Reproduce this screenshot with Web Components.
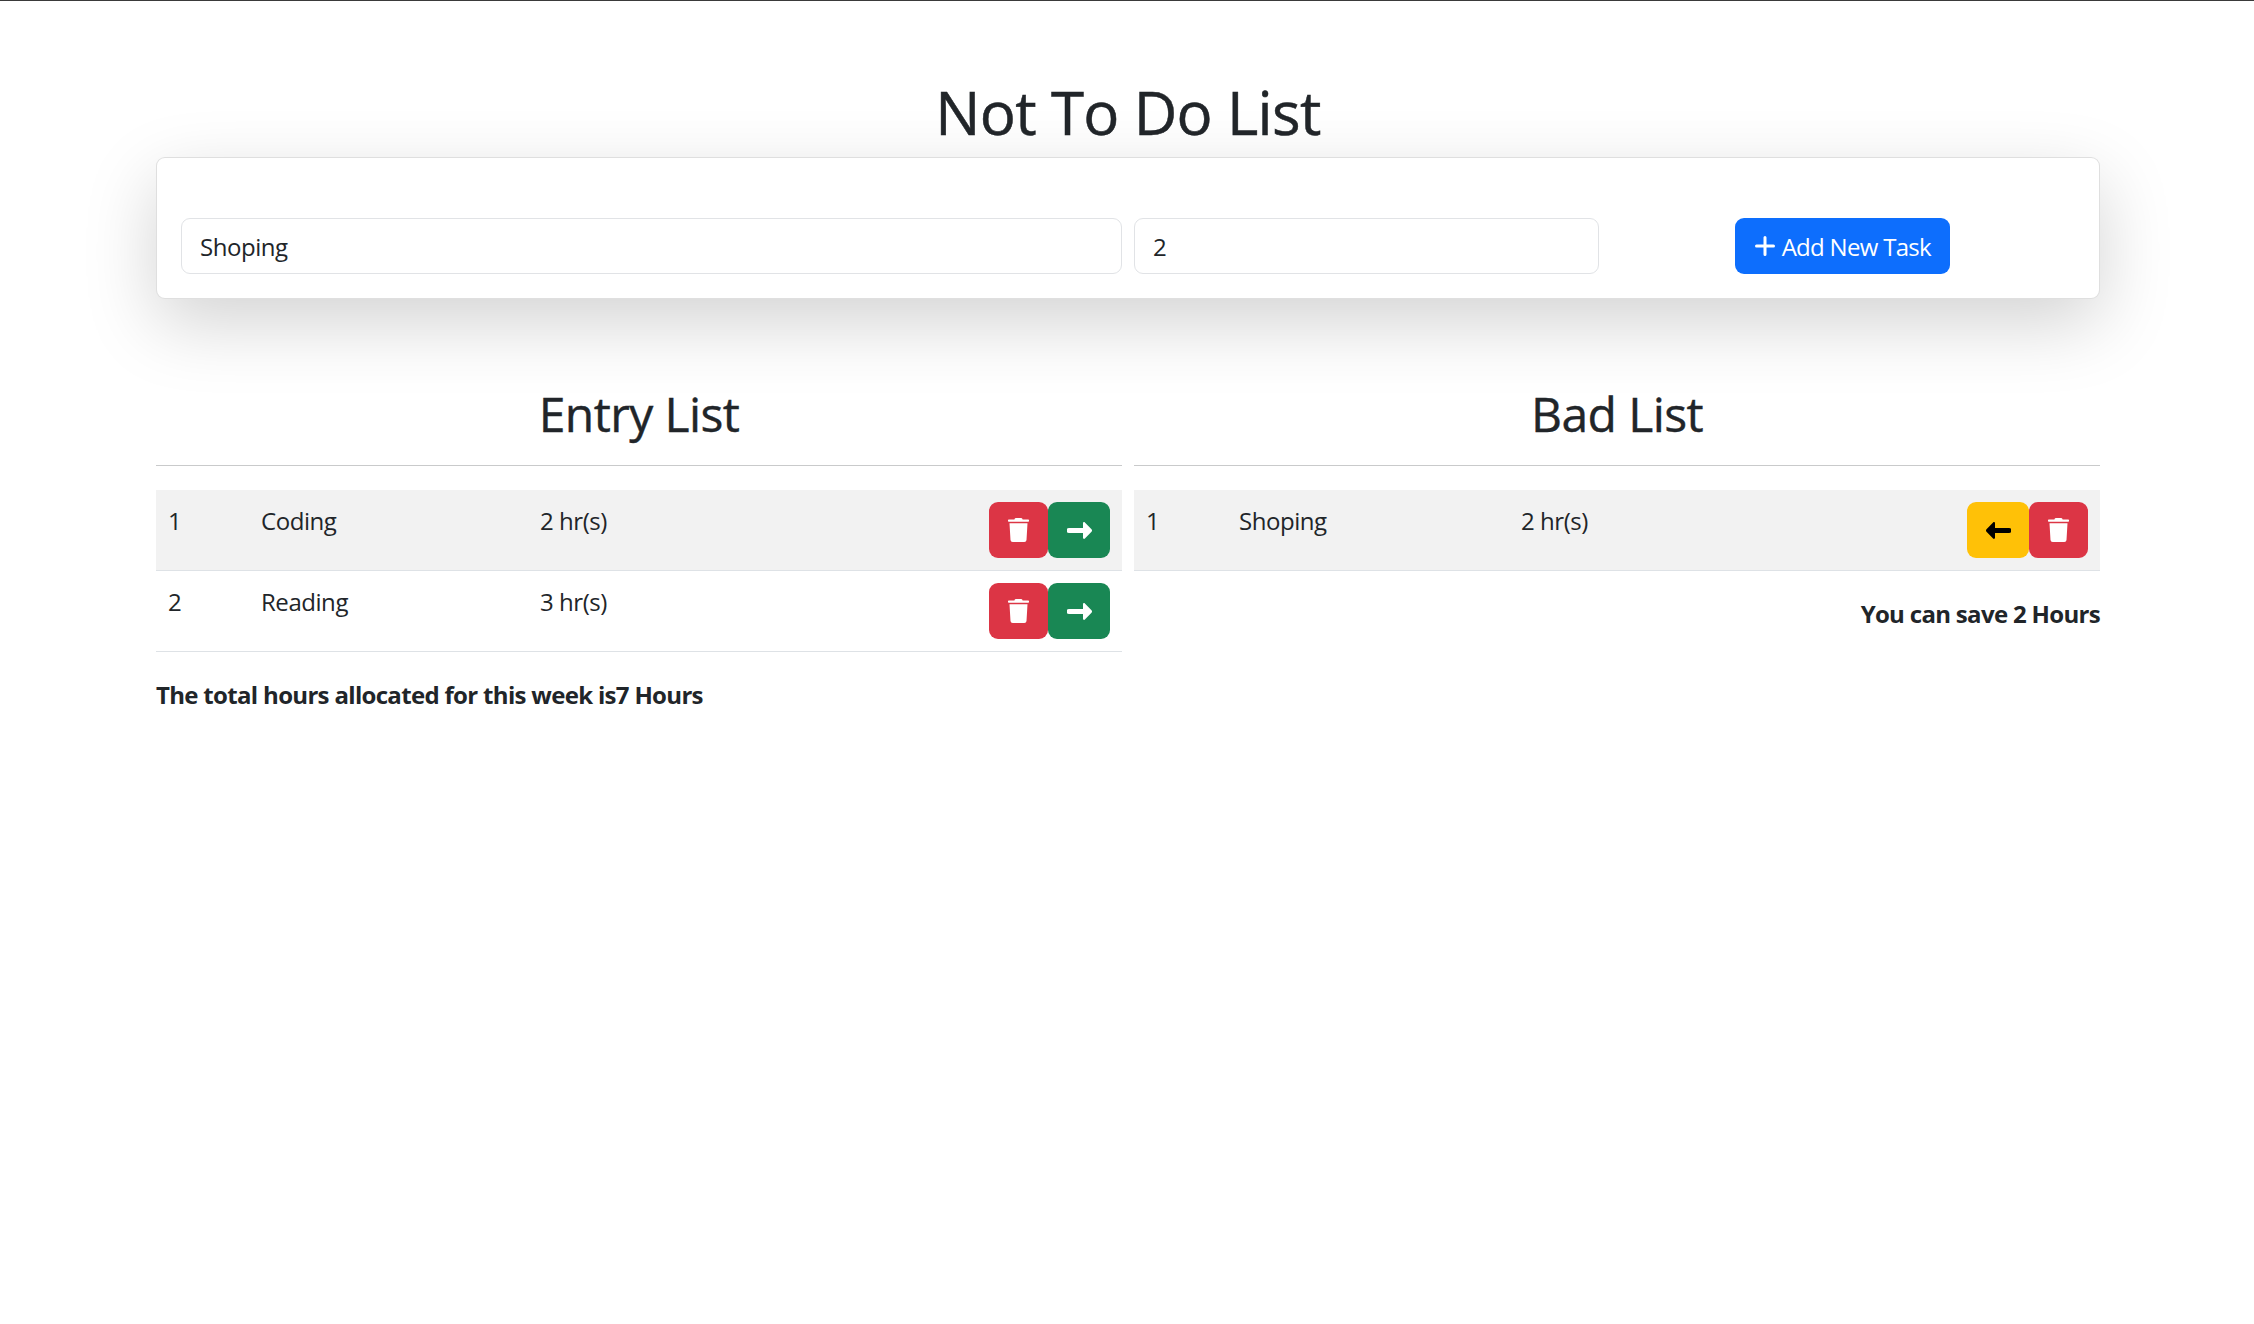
<!DOCTYPE html>
<html lang="en"><head><meta charset="utf-8"><title>Not To Do List</title>
<style>
html,body{margin:0;padding:0;background:#fff}
body{border-top:1px solid #3a3a3a;font:24px/36px "Open Sans","Noto Sans",sans-serif;color:#212529;letter-spacing:-.45px}
</style></head><body>
<todo-app>
  <task-form slot="form"></task-form>
  <task-list slot="left" heading="Entry List">
    <task-row num="1" name="Coding" hours="2 hr(s)" kind="entry"></task-row>
    <task-row num="2" name="Reading" hours="3 hr(s)" kind="entry"></task-row>
    <p slot="summary" style="margin:0;text-align:left">The total hours allocated for this week is7 Hours</p>
  </task-list>
  <task-list slot="right" heading="Bad List">
    <task-row num="1" name="Shoping" hours="2 hr(s)" kind="bad"></task-row>
    <p slot="summary" style="margin:0;text-align:right">You can save 2 Hours</p>
  </task-list>
</todo-app>
<script>
const ICONS={
 trash:'<svg viewBox="0 0 448 512" width="21" height="24" fill="currentColor"><path d="M432 32H312l-9.4-18.7A24 24 0 0 0 281.1 0H166.8a23.72 23.72 0 0 0-21.4 13.3L136 32H16A16 16 0 0 0 0 48v16a16 16 0 0 0 16 16h416a16 16 0 0 0 16-16V48a16 16 0 0 0-16-16zM53.2 467a48 48 0 0 0 47.9 45h245.8a48 48 0 0 0 47.9-45L416 112H32z"/></svg>',
 right:'<svg viewBox="0 0 25 17" width="25" height="17" fill="currentColor"><path d="M2 6h14V1.2c0-1 1.1-1.5 1.9-.8l6.6 6.9c.7.7.7 1.7 0 2.4l-6.6 6.9c-.8.7-1.9.2-1.9-.8V11H2a2.5 2.5 0 0 1 0-5z"/></svg>',
 left:'<svg viewBox="0 0 25 17" width="25" height="17" fill="currentColor"><path d="M23 6H9V1.2c0-1-1.1-1.5-1.9-.8L.5 7.3c-.7.7-.7 1.7 0 2.4l6.6 6.9c.8.7 1.9.2 1.9-.8V11h14a2.5 2.5 0 0 0 0-5z"/></svg>',
 plus:'<svg viewBox="0 0 20 20" width="20" height="20" fill="none" stroke="currentColor" stroke-width="3" stroke-linecap="round"><path d="M10 1.5v17M1.5 10h17"/></svg>'
};
class IconBtn extends HTMLElement{
 connectedCallback(){
  const c={danger:['#dc3545','#fff'],success:['#198754','#fff'],warning:['#ffc107','#000']}[this.getAttribute('variant')];
  this.attachShadow({mode:'open'}).innerHTML=`<style>
  :host{display:block}
  button{display:flex;align-items:center;justify-content:center;box-sizing:border-box;width:var(--w,62px);height:56px;border:0;padding:0;border-radius:9px;background:${c[0]};color:${c[1]}}
  </style><button type="button" aria-label="${this.getAttribute('icon')}">${ICONS[this.getAttribute('icon')]}</button>`;
 }
}
customElements.define('icon-btn',IconBtn);
class TaskRow extends HTMLElement{
 connectedCallback(){
  const g=a=>this.getAttribute(a), entry=g('kind')==='entry';
  const btns=entry?'<icon-btn variant="danger" icon="trash" style="--w:59px"></icon-btn><icon-btn variant="success" icon="right"></icon-btn>'
                  :'<icon-btn variant="warning" icon="left"></icon-btn><icon-btn variant="danger" icon="trash" style="--w:59px"></icon-btn>';
  this.attachShadow({mode:'open'}).innerHTML=`<style>
  :host{display:grid;grid-template-columns:93px ${entry?'279px':'282px'} 1fr auto;padding:12px;height:81px;box-sizing:border-box;border-bottom:1.5px solid #dee2e6;line-height:38px}
  :host(:nth-of-type(odd)){background:#f2f2f2}
  .a{display:flex}
  </style><span>${g('num')}</span><span>${g('name')}</span><span>${g('hours')}</span><span class="a">${btns}</span>`;
 }
}
customElements.define('task-row',TaskRow);
class TaskList extends HTMLElement{
 connectedCallback(){
  this.attachShadow({mode:'open'}).innerHTML=`<style>
  :host{display:block;min-width:0}
  h2{margin:0;font-size:48px;line-height:64px;font-weight:500;letter-spacing:-.6px;text-align:center;-webkit-text-stroke:.4px currentColor}
  hr{margin:19px 0 24px;border:0;border-top:1.5px solid #c9cacb}
  .s{display:block;font-weight:700;margin-top:24px;letter-spacing:-.68px;line-height:38px}
  </style><h2>${this.getAttribute('heading')}</h2><hr><slot></slot><div class="s"><slot name="summary"></slot></div>`;
 }
}
customElements.define('task-list',TaskList);
class TaskForm extends HTMLElement{
 connectedCallback(){
  this.attachShadow({mode:'open'}).innerHTML=`<style>
  :host{display:grid;grid-template-columns:941px 465px 1fr;column-gap:12px;box-sizing:border-box;margin:0;padding:60px 24px 24px;background:#fff;border:1.5px solid rgba(0,0,0,.125);border-radius:9px;box-shadow:0 24px 72px rgba(0,0,0,.175)}
  input{box-sizing:border-box;width:100%;height:56px;padding:0 18px;border:1.5px solid #e1e3e6;border-radius:9px;font:inherit;letter-spacing:inherit;color:#212529;background:#fff;outline:0}
  .c{display:flex;justify-content:flex-end;padding-right:125px}
  button{display:flex;align-items:center;gap:7px;height:56px;box-sizing:border-box;border:0;padding:2px 19px 0 20px;border-radius:9px;background:#0d6efd;color:#fff;font:inherit;letter-spacing:-.7px;white-space:nowrap}
  svg{margin-top:-2px}
  </style><input type="text" value="Shoping" aria-label="Task"><input type="number" value="2" aria-label="Hours"><div class="c"><button type="button">${ICONS.plus}<span>Add New Task</span></button></div>`;
 }
}
customElements.define('task-form',TaskForm);
class TodoApp extends HTMLElement{
 connectedCallback(){
  this.attachShadow({mode:'open'}).innerHTML=`<style>
  :host{display:block;box-sizing:border-box;width:1946px;padding:75px 0 0 2px;margin:0 auto}
  h1{margin:0 0 9px;font-size:60px;line-height:72px;font-weight:500;letter-spacing:-.65px;text-align:center;-webkit-text-stroke:.5px currentColor}
  .l{display:grid;grid-template-columns:1fr 1fr;column-gap:12px;margin-top:83px}
  </style><h1>Not To Do List</h1><slot name="form"></slot><div class="l"><slot name="left"></slot><slot name="right"></slot></div>`;
 }
}
customElements.define('todo-app',TodoApp);
</script></body></html>
